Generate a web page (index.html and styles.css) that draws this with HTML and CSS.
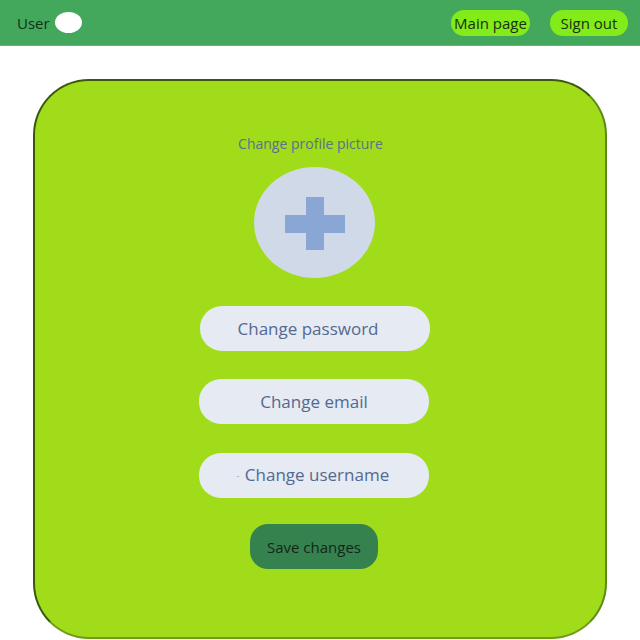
FILE: index.html
```html
<!DOCTYPE html>
<html>
<head>
<meta charset="utf-8">
<link rel="stylesheet" href="styles.css">
</head>
<body>
<header class="topbar">
  <div class="user">
    <span class="user-name">User</span>
    <span class="avatar"></span>
  </div>
  <nav class="nav">
    <a class="nav-btn nav-main">Main page</a>
    <a class="nav-btn nav-out">Sign out</a>
  </nav>
</header>
<main class="card">
  <div class="pic-label">Change profile picture</div>
  <div class="pic">
    <svg width="60" height="53" viewBox="0 0 60 53">
      <rect x="21" y="0" width="18" height="53" fill="#8aa6d5"/>
      <rect x="0" y="18" width="60" height="18" fill="#8aa6d5"/>
    </svg>
  </div>
  <div class="field f-pass">Change password</div>
  <div class="field f-email">Change email</div>
  <div class="field f-user"><span class="dot"></span>Change username</div>
  <button class="save">Save changes</button>
</main>
</body>
</html>
```
FILE: styles.css
```css
html, body {
  margin: 0;
  padding: 0;
  background: #ffffff;
  font-family: "Open Sans", "Noto Sans", sans-serif;
  overflow: hidden;
  height: 640px;
}
.topbar {
  height: 45px;
  background: #44a85c;
  border-bottom: 1px solid #62b977;
  display: flex;
  align-items: center;
  justify-content: space-between;
  padding: 0 12px 0 17px;
}
.user {
  display: flex;
  align-items: center;
  gap: 5px;
}
.user-name {
  font-size: 15px;
  color: #10301a;
}
.avatar {
  width: 27px;
  height: 21px;
  border-radius: 50%;
  background: #ffffff;
}
.nav {
  display: flex;
  gap: 20px;
}
.nav-btn {
  height: 26px;
  line-height: 26px;
  border-radius: 13px;
  background: #84eb1a;
  color: #163010;
  font-size: 15px;
  text-align: center;
}
.nav-main { width: 79px; }
.nav-out { width: 78px; }
.card {
  box-sizing: border-box;
  width: 574px;
  height: 560px;
  margin: 33px auto 0;
  background: #a0dc1a;
  border: 2px solid #3a570e;
  border-bottom-color: #6e9a1a;
  border-right-color: #5d8a16;
  border-radius: 56px;
  display: flex;
  flex-direction: column;
  align-items: center;
  padding: 54px 12px 0 0;
}
.pic-label {
  font-size: 14px;
  color: #5a7090;
  line-height: 18px;
  margin-right: 7px;
}
.pic {
  margin-top: 14px;
  width: 121px;
  height: 111px;
  border-radius: 50%;
  background: #cfd9e7;
  display: flex;
  align-items: center;
  justify-content: center;
}
.pic svg { margin-top: 2px; margin-left: 2px; }
.field {
  box-sizing: border-box;
  width: 230px;
  height: 45px;
  border-radius: 22px;
  background: #e5eaf3;
  color: #54698f;
  font-size: 17px;
  display: flex;
  align-items: center;
  justify-content: center;
}
.f-pass { margin-top: 28px; margin-left: 2px; padding-right: 14px; }
.f-email { margin-top: 28px; padding-bottom: 1px; }
.f-user { margin-top: 29px; padding-right: 2px; padding-bottom: 3px; }
.dot {
  width: 2px;
  height: 1px;
  background: #aab4c8;
  margin-right: 6px;
  margin-top: 4px;
}
.save {
  margin-top: 26px;
  width: 128px;
  height: 45px;
  border: none;
  border-radius: 18px;
  background: #35824e;
  color: #15251a;
  font-family: "Open Sans", "Noto Sans", sans-serif;
  font-size: 15px;
  padding: 0;
}
```
